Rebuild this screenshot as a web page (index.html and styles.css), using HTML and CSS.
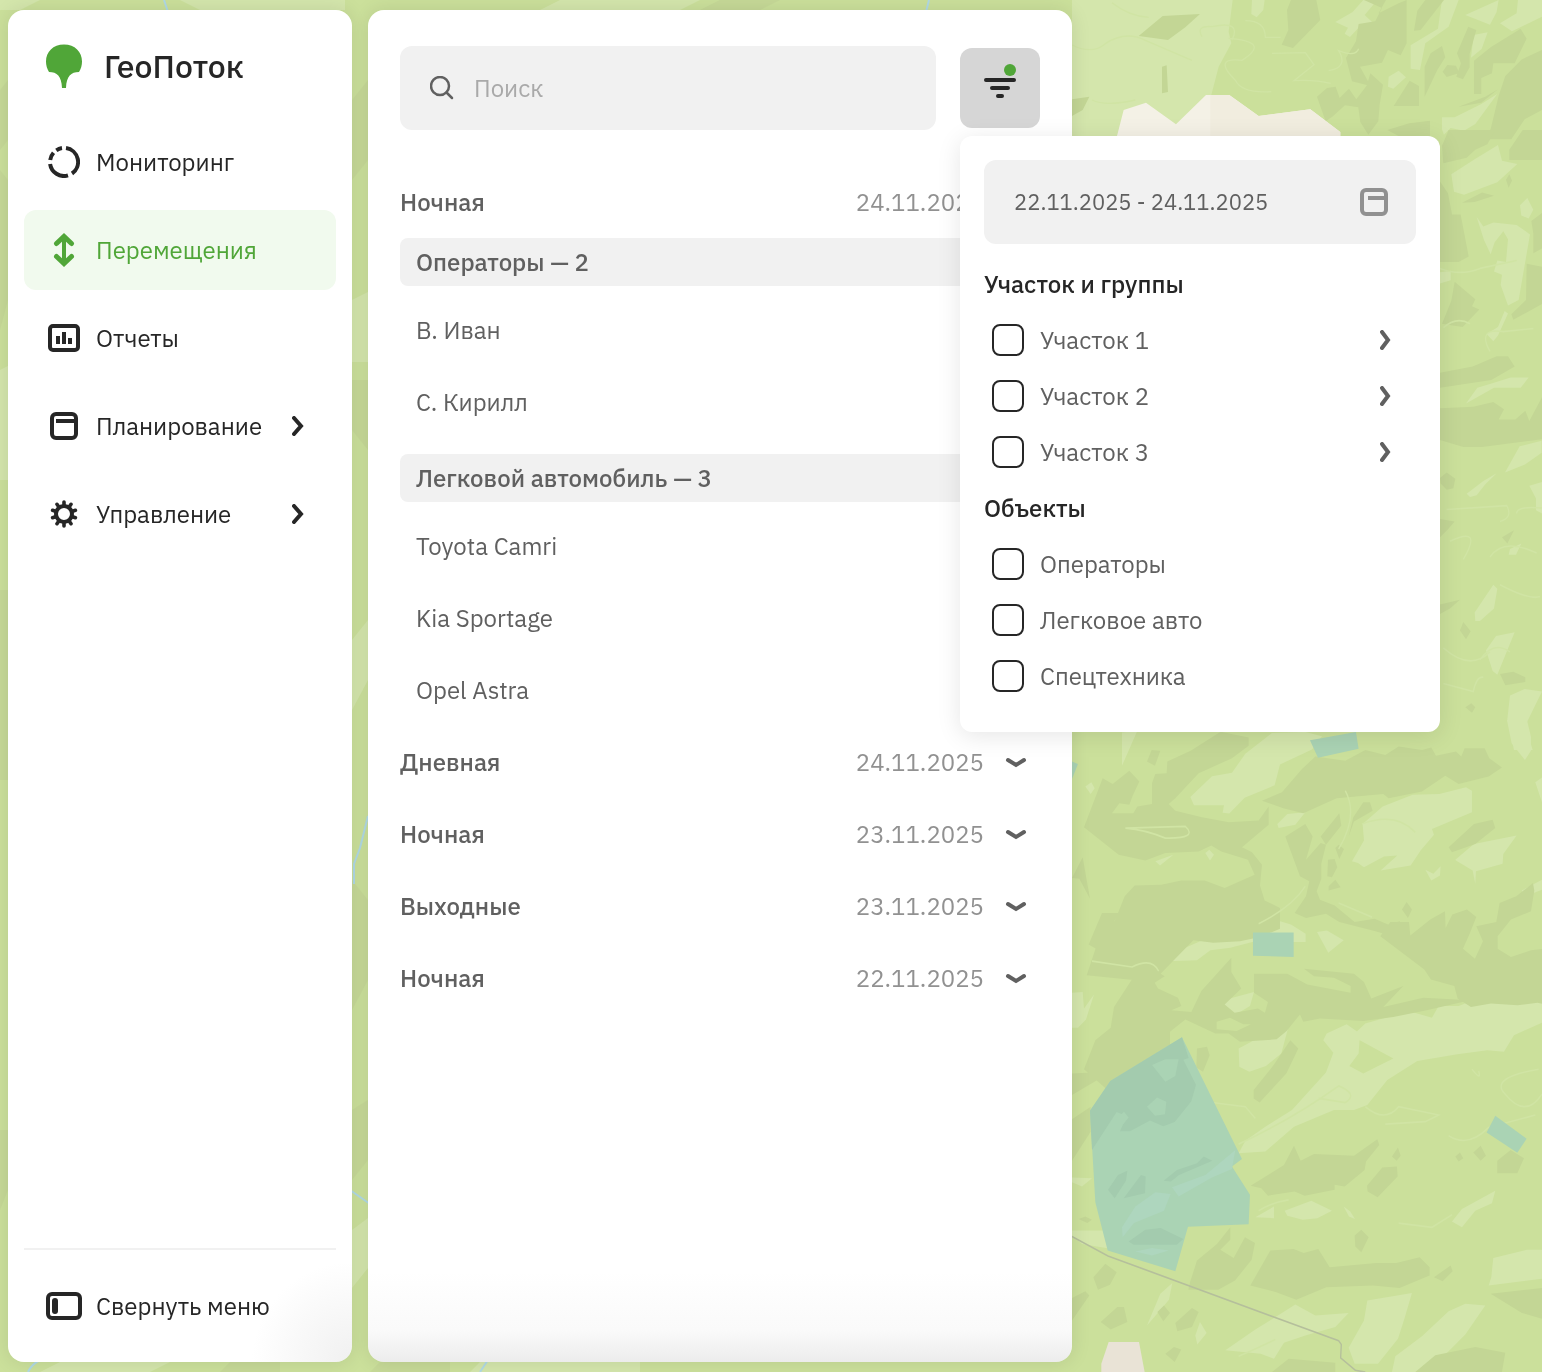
FILE: index.html
```html
<!DOCTYPE html>
<html lang="ru">
<head>
<meta charset="utf-8">
<meta name="viewport" content="width=device-width, initial-scale=1">
<title>ГеоПоток — Перемещения</title>
<link rel="stylesheet" href="styles.css">
</head>
<body>
<svg class="map" viewBox="0 0 1542 1372" preserveAspectRatio="xMaxYMin slice" aria-hidden="true">
  <rect class="land" width="1542" height="1372"/>
  <!-- west margin -->
  <g class="high">
    <path d="M0 0H40L20 10H0ZM180 0H345V10H200ZM560 0H700L680 10H540ZM0 370L8 366V480H0ZM352 640l16-20v60l-16 30ZM352 300l16-8v70h-16ZM352 1230l16-12v50l-16 20ZM60 1362h110l-20 10H40ZM480 1362h160v10H470Z"/>
  </g>
  <g class="low faint">
    <path d="M0 90l8-10v60l-8 10ZM0 170l8 10v120l-8 30ZM0 590h8v190H0ZM352 100l16-20v80l-16 20ZM352 380h16v70l-16-20ZM352 880l16 20v80l-16 30ZM352 1110l16-10v60l-16 20ZM0 1130h8v60l-8 20ZM720 0h60l-20 10h-60ZM230 1362h50v10h-60ZM380 1362h70v10h-80Z"/>
  </g>
  <path class="river" d="M164 0l4 12M929 0l-3 12M368 816l-8 32-6 16v20M350 1190l20 14M28 1372q4-8 12-12M480 1372l8-12"/>
  <!-- north-east -->
  <g transform="matrix(.3333 0 0 .3333 1072 0)">
    <path class="high" d="M0 0H200L52 66 0 30ZM200 0H482L470 95 478 130 440 200 418 285V408H0V30L52 66ZM540 0h38l-4 30-20 22-16-10ZM790 66l52-30 32-36h42l-38 45 28 26-42 8-30 32-16-10 10-18ZM1110 0h50l-30 80-70 50-16 80-28-4v-70l82-50ZM1180 45l40-18 60-27-6 36-20 38ZM1284 70l50-30 4-40h72v50l-90 44ZM950 230l30-18 22 20-38 34-16-6ZM1205 105l42-8-18 50-32 26ZM1110 352h38l80-40 48-30-66 90-34 20-40-8-20 20-6-16ZM1305 308l50-12 8 20-60 12Z"/>
    <path class="low" d="M200 108l72-60 112-6-44 40-52 38ZM645 30l12-30h76l12 60-82 84-34-10 20-44ZM876 0h66l-22 40 60-30 24-10v130l-18 36-38-16-18 38-66 12 32 58-56-14-18-70 30-50 8-52 50-8 20-40ZM1026 92l10-60 24-32h56l-70 90ZM735 290l30-26 26-4 12 34 28-28 22 32 32-42 10-36 38 34-10 60-4 50-30 40-24-38-6-44-40-6-38 34-20 14ZM965 318l48-76 28 16v60ZM1058 290v-90l18-40 34-22 10 34-24 38ZM1112 215l14-20 26 2 10 22-38 12ZM1155 160l34-80 24 10-20 72 0 40-20 36-20-8 14-40ZM1206 182l50-40 90-56 18 30-36 74-64 0-4 30-32 14v48h-22ZM1410 150l-60 28-50 50-20 60-24 100-28 30h90l40-60 52-28ZM1160 320l80-30 38-22-50 40ZM946 390l66-20 62-8v46H980ZM0 298l52-8-20 40-32 18ZM270 280l0-80 14-4 4 80Z"/>
    <path class="sand" d="M135 408l20-78 67-22 90 65 90-88h70l88 63 155-20 90 68v20Z"/>
    <path class="sand-shade" d="M415 285h57l88 63 155-20 90 68v20H415Z"/>
    <path class="contour" d="M0 135q60 30 100-4 60-40 120-10l140 60M390 110q-20-34 30-30 90-20 60 40M470 115q130 10 40 66-90-10-20 60 20 40 108 34M520 62q60 0 60 50l46 0M600 160l100-2 26 36-60 48q60-4 110 8M770 212q60-10 30-60 50 20 60-6M60 300q40 20 130 0M120 8q50 40 110 44"/>
  </g>
  <!-- east edge -->
  <g transform="matrix(.3333 0 0 .3954 1430 130)">
    <path class="high" d="M64 112l70-38 70-36 12 40 46 8-60 46-100 32-30-8ZM140 220l20 24 30-10 70 6 40 24-34 166-32 14-22-52 4-26-24-8 10-28 26 4 6-58-14-20-26 28-12 30-20-36ZM270 190l22-18 18 30-14 22-22-8ZM30 360l32-4v24l-32 8ZM170 516l34-18 20-40 10 6-30 56-14 14ZM108 692l34-40 40-10 60-16 54 0-24 26h-80ZM225 866l44-66 66-14v30l-50 30ZM110 920l50-32 40-20-34 28-26 28-20 4ZM298 900l38-10v80l-18-8v-30ZM134 1220l56-70 12 10-10 50-42 32-14 0ZM168 1316l30-36 56-10-52 108-14-10ZM232 1490l8-60 44-16 52 6-50 86 22 62h-56ZM240 1060l34-14-16 28-22 0Z"/>
    <path class="low" d="M36 40l20-40h140l-24 36-36 14-26 20-70 14ZM238 50l40-50h58v76h-98ZM30 130l24 30 12 54 26 0 24 106-30 14H30ZM36 490l28-58 10-48 62 44-10 18 22 8-50 44ZM244 466l44-36 2-92 46 8v94l-86 40ZM30 614l98-16 72-26 34 0 20 26-70 34-154 20ZM30 704l100-4 60-12 32 18-16 26h50l30-22 12 26 38-60v106l-180 20h-56l-70-18ZM96 184l60-26 36 8-58 16ZM228 126l10-14 8 16-10 18ZM304 230l32-20v90l-26 12v-50ZM30 880l20-14 26 16-6 24-20 4-18-16ZM30 984l44 6-20 20-24 20ZM30 1200l60-12-30 22-30 14ZM90 1266l10-22 22 24-14 20ZM210 1376l40-6 36 14v12l-60 8ZM216 1030l36-18-20 34ZM106 1460l18-10 12 10-10 14Z"/>
    <path class="contour" d="M30 350q60 20 120 0l110-20M40 500q40-30 80-10M180 560q-40-60 40-50l90-8M50 960l180-10q20 30-20 40M260 970q0-20 76-14M60 1040q100-40 40 46M180 1080q40-50 140-10M40 1310q80 60 140 10M150 1340q40-50 90-20M210 1150q90 40 120 30M40 1400l90 20q10-40 30-36"/>
  </g>
  <!-- south-east -->
  <g transform="matrix(.3333 0 0 .4158 1072 720)">
    <path class="high" d="M355 185l65-50 60-8 40-46 80-50 100-2 50 10-30 32-96 36-16 50-90 30-46 38-20-2 4-18-90 0ZM616 250l30-24 54-4-30 30-50 8ZM840 340l36-50-4-40 60-42 90-28 80-2 80-16 18 8v52l-120 40 6 14-40 38-30 36-90 12 50-36-40 2-60 26-18-10ZM1060 360l24 10 22-18-2 22-26 12ZM1150 336l56-38 128-20-40 44-2 24-80 18-2 30-8-32-50-24ZM1350 410l60-26v24l-56 18ZM285 580l2-14 150-52 100-20 70-14 50 12 44 22 0 20h-160l-66 14-60 6-40 24ZM735 510l30-4 50 24-46 30ZM0 656l32-2 4 40 30-34-24 60-24 20-18 0ZM225 684l40-24 20 10 32 14ZM418 686l44-14 84-18-12 34-46 22-30-12ZM500 790l80-34 24-14h44l-20 60-46 30-50 14-30-12ZM840 760l40-30 130-30 70 16 20-28 60 0 120-38 130-2v80l-84 30-30 40-50-4-90 10-120 16-90 46-60 60-40 12-60 0-120 40-86 60-80 4 20-30 60-34 80-40 102-90 22-48-30-30 10-16 60-22 40 22-4 48-28 30 42 18 40-16 50-20ZM250 340l54-16-40 26ZM40 160l18-10 10 14-12 14ZM0 1228h100l20 30 0 14-90-12-30-20ZM0 1100l60 2-30 20-30-10ZM638 1180l80-24 62 24-44 18-44 4-46-10ZM550 1196l56-26v28ZM815 1170l20 12 14 18-18-6ZM1140 1206l30-30 100-44-10 30-50 18-40 40ZM1258 1340l6-46 100-20h46v70l-160 16ZM830 1510l46-66 10-48 134-18-22 60-20 50-60 60-70 0ZM960 1568l10-38 80-48 80-60 50-18 60 4-60 70-80 64-44 26ZM460 1516l90-50 120-60 60 26 100-6-40 34-90 20-64 18-30 38-40-12ZM225 1456l40-76 36-26-10 40-40 38ZM1305 0h60l12 40 0 34-18 22-40-40ZM1390 150l20-12v60ZM370 1480l14-32 20 26-28 28ZM620 1330l40-28 30 30-30 38ZM150 30l46-4-46 84ZM400 320l12-8 14 12-12 14Z"/>
    <path class="low" d="M36 258l56-118 30 14 50-32 30 26-20 34-10 22-30-4-22 24h64l12-16 44-6v-50l10-22 34-2 2-28 70-26 90-46 84 14v20l-50 30-100 36-70 60-20 14 20 16 80 16 80 12 90-4 30-34v44l-80 54 30 12 30 30-6 50 14 36 46 18 0 50-60 20-60 10-80 4-60-6-110 90-40 8-170-14 54-130h30l30-60 30-26 80-2 60-10h70l60 18 90-32-20-36-80-20-30-14-38 14-100 4-60 18-80-14ZM570 194l60-20 60-56 40-30 90 10 60-26 60 12 40-20 70 8 28-6 14 20 60-10 16 12 10-20h60l14 24 38 22-40 22-90 18-40-20-70 38-100 16-16-10-140 10-100 36-60-12ZM746 280l56-56 6 30-46 46ZM640 280l60-30 22 30-20 56 44-40 16 4-14 46 0 36-14 30 10 20 44 14 60 40 60-8 40 14 36-8-2 40-80-18-100-20-40-20-60 10-34-12 34-40 10-36-28-12ZM830 280l14-46 30-36h20l8 20-56 26ZM1130 306l76-56 56-10 8 20-60 38-70 20ZM768 336l20-2 8 20-16 24-14-2ZM790 308l10-8 16 10-14 24ZM770 400l20-16 16 18-36 8ZM990 456l14-18 16 18-12 20ZM925 520l30-34 56 0 4 32 60-38 44-20 2 40 20-32 44-12 28 18-20 40-20 36 36 24 24-42-20-36 60-10 10-46 50-16 50-32 4 18-10 50-60 20-40 40 0 30 40 20 60-16 80-8v144l-60-10-60 6-80-4-60 8-40-20-10-30-70-16-20-24ZM0 380l32-50 22 100-32-48ZM50 540l40-76h50l-60 90ZM36 840l34-70 46-30 10-50 60-74 60-16 32 16-30 16 10 14 60 22 10 20-30 10 60 4 30-50 90-80v34l30 40-50 38 30 20 70-10 36 18-20 20h-60l-40-16-40 10 0 18 60 4 80-30 14-40-42-22v-46h100l60 26 130 20 0-16-50-20-60-4-30-18 150 12 30 20 22 40 96-30-60 50 120-22 140 6-130 24-100 16-90 10-130-6-50 8-10-18-40 40-30 20-110 6-34-20-40 0-90-34-46 30v46l-70 26-20 50-60 30-40-14ZM545 890l60-60 50-60 24 20-36 60-80 70-18-10ZM375 790l30-4 8 20-20 40-20-10ZM536 1120l100-50 30-46 20 36 40-16 120 4 70-40 6 14-40 40-4 20-60 40-30-4 0 12-90 14-30-10-80 10-20-18ZM885 1120l46-44 44-2 2 24-60 50-30-14ZM960 1050l18-22 8 20-12 12ZM1150 1050l14-10 10 14-14 8ZM1204 1040l22-16 16 24-16 12ZM1276 1060l40-26 40 20-20 36-60 0ZM355 1350l20-50 60-40 40-40 0 30-30 24 40 20 34-50 30 14-10 40-50 50-50 22-90 0ZM535 1360l60-84 70-4 30 10 44-10 34 44 140-10 60 0 70-14 30 24 0 20-90 30-80-6-140 4-90 30-60-18ZM848 1240l20-14 22 18-22 36-18-14ZM1086 1340l50-28 6 14-30 24ZM64 1340l36-32 34 20-20 30-36 12ZM86 1448l50-36 20 0 10 36-50 18ZM256 1424l20-16 18 18-20 20ZM310 1450l50-36 20 10-20 36-44 10ZM280 1524l26-16 22 6-20 30ZM0 1390l40-16 12 10-52 60ZM1256 1380l154-14v74l-60-14ZM1030 1568l60-40 120-20 90 14-10 46ZM0 960l56-30v60l-56 70ZM0 850l60-2 24 14-84 40ZM20 1200l20-6 20 8-14 8ZM600 1568l50-32 140 10 0 22ZM225 100l14-28 26 2-16 36Z"/>
    <path class="contour" d="M60 580l120 14q60-24 80 10M160 260l180-4q40 30-60 28-60-20-120-24M500 1020q160-60 300-140 60 20 20 40l-80-10M560 490q100-40 140-90M800 440l100 34M820 170q40 60-20 140M420 920l100 10 30 28M880 930q60 40 100 0l120 20-40 16-120 6M1130 1000q60 30 120-20l140-30M1400 840q-150 20-100 60 60 60 110 0M560 1180q40-20 90-26M980 1210l100 10 60-30M870 250q100-30 160 20M1200 840q30 30 20 4M500 1530q60-20 110-40"/>
    <path class="water" d="M330 763L510 1056 480 1074 534 1142 530 1213 348 1219 310 1326 107 1276 70 1160 54 940 115 868ZM714 49l138-20 8 40-122 22ZM543 511h122v59l-122-3ZM1270 952l94 55-28 34-92-49ZM0 100l18 6-18 36Z"/>
    <path class="water-low" d="M60 1034l-6-94 61-72 215-105 20 50-16 4 38 60-14 40-50 50-34 10-40-14-60 26-30 0 20-36-30-10ZM108 1130l30-36 28-10-4 24-34 42ZM155 1150l52-56 14 4-2 40ZM275 1108l40-26 60-16 20-16 26 10-40 14-60 20-24 16ZM170 1254l50-28 46-4 68 26-20 14H185Z"/>
    <path class="water-high" d="M300 1124l100-30 90-60-10 46-60 20-100 46ZM150 1220l40-50 60-34 46 4-20 40-90 30-34 34ZM190 1278l50-8 50 6-50 12Z"/>
    <path class="water" d="M225 930l30-22 28 10-4 30-30 4ZM240 830l40-14 40 0-10 40-30 14ZM132 960l24-18 14 14-20 20Z"/>
    <path class="road" d="M0 1242L108 1289 800 1493 808 1502 806 1534 850 1564 880 1568"/>
    <path class="town" d="M88 1568l0-20 22-52h91l17 72Z"/>
  </g>
</svg>

<div class="app">
  <aside class="card sidebar">
    <header class="brand">
      <svg class="brand-mark" width="36" height="44" viewBox="0 0 36 44" aria-hidden="true"><path fill="#50a638" d="M18 .500C7 .500 0 8 0 17.500c0 4 1 7 3 10.500 8 0 12.500 4 13 16h4C20.500 32 25 28 33 28 35 24.500 36 21.500 36 17.500 36 8 29 .500 18 .500Z"/></svg>
      <h1 class="brand-name">ГеоПоток</h1>
    </header>
    <nav class="nav">
      <a class="nav-item" href="#monitoring">
        <svg class="icon" viewBox="0 0 32 32" fill="none" stroke="currentColor" stroke-width="4" aria-hidden="true"><path d="M18 2.100A14 14 0 0 1 24 27.500M20 29.400A14 14 0 0 1 2.100 18M2.200 14A14 14 0 0 1 5.500 6.800M8.300 4.300A14 14 0 0 1 14 2.100"/></svg>
        <span>Мониторинг</span>
      </a>
      <a class="nav-item is-active" href="#moves" aria-current="page">
        <svg class="icon icon-tall" viewBox="0 0 32 36" fill="none" stroke="currentColor" stroke-width="4" aria-hidden="true"><path d="M16 5v26"/><path stroke-linecap="round" stroke-width="5" d="M8.500 11.500l7.500-7 7.500 7M8.500 24.500l7.500 7 7.500-7"/></svg>
        <span>Перемещения</span>
      </a>
      <a class="nav-item" href="#reports">
        <svg class="icon" viewBox="0 0 32 32" fill="none" stroke="currentColor" stroke-width="4" aria-hidden="true"><rect x="2" y="4" width="28" height="24" rx="3"/><path d="M10 14v8M16 10v12M22 16v6"/></svg>
        <span>Отчеты</span>
      </a>
      <a class="nav-item" href="#planning">
        <svg class="icon" viewBox="0 0 32 32" fill="none" stroke="currentColor" stroke-width="4" aria-hidden="true"><rect x="4" y="4" width="24" height="24" rx="4"/><path d="M8 10h19" transform="translate(0 1)"/></svg>
        <span>Планирование</span>
        <svg class="nav-arrow" viewBox="0 0 12 20" aria-hidden="true"><path d="M2 2l7 8-7 8"/></svg>
      </a>
      <a class="nav-item" href="#management">
        <svg class="icon" viewBox="0 0 32 32" fill="none" stroke="currentColor" stroke-width="4" aria-hidden="true"><circle cx="16" cy="16" r="8"/><path stroke-linecap="round" stroke-width="3.600" d="M16 7V4M16 25v3M7.400 13.200l-2.800-.9M24.600 13.200l2.800-.9M7.400 18.800l-2.800.9M24.600 18.800l2.800.9M10.700 8.700L9 6.300M21.300 8.700L23 6.300M10.700 23.300L9 25.700M21.300 23.300l1.700 2.400"/></svg>
        <span>Управление</span>
        <svg class="nav-arrow" viewBox="0 0 12 20" aria-hidden="true"><path d="M2 2l7 8-7 8"/></svg>
      </a>
    </nav>
    <footer class="sidebar-foot">
      <button class="nav-item" type="button">
        <svg class="icon icon-wide" viewBox="0 0 36 32" fill="none" stroke="currentColor" stroke-width="4" aria-hidden="true"><rect x="2" y="4" width="32" height="24" rx="4"/><path stroke-width="6" stroke-linecap="round" d="M9 11v10"/></svg>
        <span>Свернуть меню</span>
      </button>
    </footer>
  </aside>

  <main class="card panel">
    <div class="toolbar">
      <label class="search">
        <svg class="search-icon" viewBox="0 0 24 24" fill="none" stroke="currentColor" stroke-width="2.500" stroke-linecap="round" aria-hidden="true"><circle cx="10" cy="10" r="9"/><path d="M16.500 16.500L22 22"/></svg>
        <input class="search-input" type="search" placeholder="Поиск" aria-label="Поиск">
      </label>
      <div class="filter">
        <button class="filter-button" type="button" aria-label="Фильтр" aria-expanded="true">
          <svg width="32" height="36" viewBox="0 0 32 36" aria-hidden="true"><path fill="none" stroke="#262626" stroke-width="4" stroke-linecap="round" d="M2 16h28M8 24h16M14 32h4"/><circle cx="26" cy="6" r="6" fill="#50a638"/></svg>
        </button>
        <section class="filter-menu" aria-label="Параметры фильтра">
          <label class="period">
            <input class="period-input" type="text" value="22.11.2025 - 24.11.2025" aria-label="Период">
            <svg class="period-icon" viewBox="0 0 28 28" fill="none" stroke="currentColor" stroke-width="4" aria-hidden="true"><rect x="2" y="2" width="24" height="24" rx="4"/><path d="M8 10h17"/></svg>
          </label>
          <h2 class="filter-title">Участок и группы</h2>
          <div class="option"><label class="option-label"><input class="check" type="checkbox"><span>Участок 1</span></label><button class="expand" type="button" aria-label="Раскрыть Участок 1"><svg viewBox="0 0 12 20" aria-hidden="true"><path d="M2 2l6 8-6 8"/></svg></button></div>
          <div class="option"><label class="option-label"><input class="check" type="checkbox"><span>Участок 2</span></label><button class="expand" type="button" aria-label="Раскрыть Участок 2"><svg viewBox="0 0 12 20" aria-hidden="true"><path d="M2 2l6 8-6 8"/></svg></button></div>
          <div class="option"><label class="option-label"><input class="check" type="checkbox"><span>Участок 3</span></label><button class="expand" type="button" aria-label="Раскрыть Участок 3"><svg viewBox="0 0 12 20" aria-hidden="true"><path d="M2 2l6 8-6 8"/></svg></button></div>
          <h2 class="filter-title">Объекты</h2>
          <div class="option"><label class="option-label"><input class="check" type="checkbox"><span>Операторы</span></label></div>
          <div class="option"><label class="option-label"><input class="check" type="checkbox"><span>Легковое авто</span></label></div>
          <div class="option"><label class="option-label"><input class="check" type="checkbox"><span>Спецтехника</span></label></div>
        </section>
      </div>
    </div>

    <div class="shifts">
      <button class="shift" type="button" aria-expanded="true"><span class="shift-name">Ночная</span><span class="shift-date">24.11.2025</span><svg class="shift-arrow is-open" viewBox="0 0 48 20" aria-hidden="true"><path d="M16 8l8 5 8-5"/></svg></button>
      <h3 class="group">Операторы — 2</h3>
      <ul class="members">
        <li>В. Иван</li>
        <li>С. Кирилл</li>
      </ul>
      <h3 class="group">Легковой автомобиль — 3</h3>
      <ul class="members">
        <li>Toyota Camri</li>
        <li>Kia Sportage</li>
        <li>Opel Astra</li>
      </ul>
      <button class="shift" type="button" aria-expanded="false"><span class="shift-name">Дневная</span><span class="shift-date">24.11.2025</span><svg class="shift-arrow" viewBox="0 0 48 20" aria-hidden="true"><path d="M16 8l8 5 8-5"/></svg></button>
      <button class="shift" type="button" aria-expanded="false"><span class="shift-name">Ночная</span><span class="shift-date">23.11.2025</span><svg class="shift-arrow" viewBox="0 0 48 20" aria-hidden="true"><path d="M16 8l8 5 8-5"/></svg></button>
      <button class="shift" type="button" aria-expanded="false"><span class="shift-name">Выходные</span><span class="shift-date">23.11.2025</span><svg class="shift-arrow" viewBox="0 0 48 20" aria-hidden="true"><path d="M16 8l8 5 8-5"/></svg></button>
      <button class="shift" type="button" aria-expanded="false"><span class="shift-name">Ночная</span><span class="shift-date">22.11.2025</span><svg class="shift-arrow" viewBox="0 0 48 20" aria-hidden="true"><path d="M16 8l8 5 8-5"/></svg></button>
    </div>
  </main>
</div>
</body>
</html>
```

FILE: styles.css
```css
:root {
  --ink: #262626;
  --text: #606060;
  --muted: #919191;
  --field: #f1f1f1;
  --green: #50a638;
}

*, *::before, *::after { box-sizing: border-box; }

body {
  margin: 0;
  color: var(--text);
  background: #cbe09b;
  font: 400 24px/32px "IBM Plex Sans", "Noto Sans", sans-serif;
}

button, input { font: inherit; color: inherit; }

button {
  padding: 0;
  border: 0;
  background: none;
  text-align: left;
  cursor: pointer;
}

h1, h2, h3, ul { margin: 0; padding: 0; }

/* Map */
.map {
  position: fixed;
  inset: 0;
  width: 100%;
  height: 100%;
}
.land { fill: #cbe09b; }
.high { fill: #d4e6ac; }
.low { fill: #c3d695; }
.faint { opacity: .7; }
.sand { fill: #f4f1e6; }
.sand-shade { fill: #f1eddf; }
.town { fill: #e9e3d6; }
.water { fill: #aad3b4; }
.water-low { fill: #a3cbae; }
.water-high { fill: #aed6be; }
.river { fill: none; stroke: #b0d9e4; stroke-width: 2; }
.road { fill: none; stroke: #b5bf9c; stroke-width: 4; }
.contour { fill: none; stroke: #d0e4a4; stroke-width: 4; }

/* Shell */
.app {
  position: relative;
  display: flex;
  gap: 16px;
  min-height: 100vh;
  padding: 10px 8px;
}
.card {
  border-radius: 16px;
  background: #fff;
  box-shadow: 0 0 20px rgba(0, 0, 0, .1);
}

/* Sidebar */
.sidebar {
  display: flex;
  flex-direction: column;
  flex: 0 0 344px;
  padding: 16px;
  background: radial-gradient(circle at 100% 100%, #f0f0f0, #fff 100px);
}
.brand {
  display: flex;
  align-items: center;
  gap: 22px;
  height: 80px;
  margin-bottom: 16px;
  padding-left: 22px;
}
.brand-name {
  color: var(--ink);
  font-size: 32px;
  font-weight: 500;
  line-height: 40px;
}
.nav {
  display: flex;
  flex-direction: column;
  gap: 8px;
}
.nav-item {
  display: flex;
  align-items: center;
  gap: 16px;
  width: 100%;
  height: 80px;
  padding: 0 32px 0 24px;
  border-radius: 12px;
  color: var(--ink);
  text-decoration: none;
  white-space: nowrap;
}
.nav-item.is-active {
  color: var(--green);
  background: #f1faee;
}
.icon {
  flex: none;
  width: 32px;
  height: 32px;
}
.icon-tall { height: 36px; }
.icon-wide {
  width: 36px;
  margin: 0 -2px;
}
.nav-arrow {
  flex: none;
  width: 12px;
  height: 20px;
  margin-left: auto;
}
.nav-arrow path, .expand path, .shift-arrow path {
  fill: none;
  stroke: currentColor;
  stroke-width: 4;
  stroke-linecap: round;
}
.sidebar-foot {
  margin-top: auto;
  padding-top: 16px;
  border-top: 2px solid var(--field);
}

/* Panel */
.panel {
  flex: 0 1 704px;
  padding: 36px 32px;
  background: linear-gradient(to top, #ececec, #fafafa 32px, #fff 90px);
}
.toolbar {
  display: flex;
  align-items: center;
  gap: 24px;
  margin-bottom: 36px;
}
.search {
  display: flex;
  align-items: center;
  flex: 1;
  gap: 20px;
  height: 84px;
  padding: 0 30px;
  border-radius: 12px;
  background: var(--field);
}
.search-icon {
  flex: none;
  width: 24px;
  height: 24px;
}
.search-input, .period-input {
  flex: 1;
  min-width: 0;
  padding: 0;
  border: 0;
  outline: 0;
  background: none;
}
.search-input::placeholder { color: #a9a9a9; opacity: 1; }

/* Filter */
.filter { position: relative; }
.filter-button {
  display: grid;
  place-items: center;
  width: 80px;
  height: 80px;
  padding-bottom: 12px;
  border-radius: 12px;
  background: #d6d6d6;
}
.filter-menu {
  position: absolute;
  z-index: 1;
  top: 88px;
  left: 0;
  width: 480px;
  padding: 24px 24px 28px;
  border-radius: 12px;
  background: #fff;
  box-shadow: 0 4px 24px rgba(0, 0, 0, .1);
}
.period {
  display: flex;
  align-items: center;
  height: 84px;
  margin-bottom: 12px;
  padding: 0 28px 0 30px;
  border-radius: 12px;
  background: var(--field);
}
.period-input { font-size: 22px; }
.period-icon {
  flex: none;
  width: 28px;
  height: 28px;
  color: var(--muted);
}
.filter-title {
  color: var(--ink);
  font-size: 24px;
  font-weight: 500;
  line-height: 56px;
}
.option {
  display: flex;
  align-items: center;
  height: 56px;
  padding: 0 24px 0 8px;
}
.option-label {
  display: flex;
  align-items: center;
  flex: 1;
  gap: 16px;
}
.check {
  appearance: none;
  width: 32px;
  height: 32px;
  margin: 0;
  border: 2px solid var(--ink);
  border-radius: 8px;
  background: #fff;
}
.check:checked { background: var(--green); }
.expand svg {
  display: block;
  width: 12px;
  height: 20px;
}

/* Shifts */
.shift {
  display: flex;
  align-items: center;
  gap: 8px;
  width: 100%;
  height: 72px;
}
.shift-name {
  flex: 1;
  font-weight: 500;
}
.shift-date { color: var(--muted); }
.shift-arrow {
  width: 48px;
  height: 20px;
}
.shift-arrow.is-open { transform: rotate(180deg); }
.group {
  margin: 16px 0 8px;
  padding: 8px 16px;
  border-radius: 8px;
  background: var(--field);
  font-size: 24px;
  font-weight: 500;
}
.shift + .group { margin-top: 0; }
.members { list-style: none; }
.members li {
  padding: 20px 16px;
}
```
